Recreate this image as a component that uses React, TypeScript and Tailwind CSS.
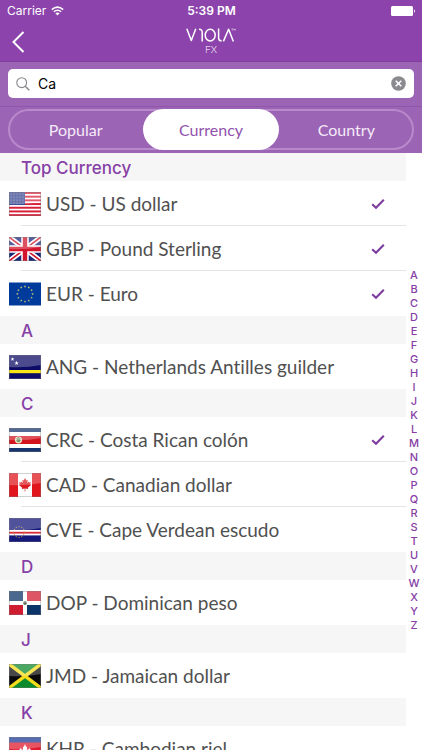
import { useState, type ReactNode } from "react";

type Currency = { code: string; name: string; flag: ReactNode; checked?: boolean };
type Section = { title: string; items: Currency[] };

const STAR_ANGLES = [0, 30, 60, 90, 120, 150, 180, 210, 240, 270, 300, 330];

function Flag({ children, gloss = true }: { children: ReactNode; gloss?: boolean }) {
  return (
    <svg viewBox="0 0 32 24" className="h-6 w-8 shrink-0" aria-hidden="true">
      {children}
      {gloss && (
        <>
          <path d="M0 0H32V10Q16 13 0 12Z" fill="#fff" opacity="0.26" />
          <rect x="0.5" y="0.5" width="31" height="23" fill="none" stroke="#777" strokeOpacity="0.35" />
        </>
      )}
    </svg>
  );
}

const flags = {
  us: (
    <Flag>
      <rect width="32" height="24" fill="#fff" />
      {[0, 1, 2, 3, 4, 5, 6].map((i) => (
        <rect key={i} y={i * 3.69} width="32" height="1.95" fill="#d8203a" />
      ))}
      <rect width="16" height="13" fill="#38478f" />
      {[2, 5, 8, 11].map((y) =>
        [2, 5, 8, 11, 14].map((x) => <circle key={`${x}-${y}`} cx={x} cy={y} r="0.5" fill="#a9b1da" />),
      )}
    </Flag>
  ),
  gb: (
    <Flag>
      <rect width="32" height="24" fill="#1b2878" />
      <path d="M0 0L32 24M32 0L0 24" stroke="#fff" strokeWidth="5" />
      <path d="M0 0L32 24M32 0L0 24" stroke="#cf142b" strokeWidth="1.6" />
      <path d="M16 0V24M0 12H32" stroke="#fff" strokeWidth="7.5" />
      <path d="M16 0V24M0 12H32" stroke="#d2142c" strokeWidth="4.4" />
    </Flag>
  ),
  eu: (
    <Flag gloss={false}>
      <rect width="32" height="23" y="0.5" fill="#003b9c" />
      {STAR_ANGLES.map((a) => (
        <path
          key={a}
          transform={`rotate(${a} 16 12) translate(16 4.4) rotate(${-a})`}
          d="M0-1.3L.35-.4H1.25L.5.15.8 1.05 0 .5-.8 1.05-.5.15-1.25-.4H-.35Z"
          fill="#d8cf70"
        />
      ))}
    </Flag>
  ),
  cw: (
    <Flag>
      <rect width="32" height="24" fill="#0c0c66" />
      <rect y="15" width="32" height="3.2" fill="#f6e416" />
      <path
        d="M3.5 2.2L4 3.6H5.3L4.3 4.4 4.6 5.7 3.5 4.9 2.4 5.7 2.7 4.4 1.7 3.6H3ZM7.6 5.8L8.2 7.4H9.8L8.5 8.4 9 10 7.6 9 6.2 10 6.7 8.4 5.4 7.4H7Z"
        fill="#fff"
      />
    </Flag>
  ),
  cr: (
    <Flag>
      <rect width="32" height="24" fill="#17356f" />
      <rect y="4" width="32" height="16" fill="#fff" />
      <rect y="8" width="32" height="8" fill="#d4141f" />
      <ellipse cx="9.5" cy="12" rx="3.6" ry="3.4" fill="#e9dfc8" />
      <circle cx="9.5" cy="12.2" r="2" fill="#6f9a63" />
      <path d="M7.5 10.5Q9.5 8.6 11.5 10.5" stroke="#7a5a3a" strokeWidth="0.8" fill="none" />
    </Flag>
  ),
  ca: (
    <Flag>
      <rect width="32" height="24" fill="#fff" />
      <path d="M0 0H9V24H0ZM23 0H32V24H23Z" fill="#e0161c" />
      <path
        d="M16 5L17.3 7.5 18.7 6.8 18.1 10 19.7 8.6 20.1 9.6 21.9 9.3 21.2 11.3 22.1 12 18.8 14.7 19.2 16 16.3 15.5V18.4H15.7V15.5L12.8 16 13.2 14.7 9.9 12 10.8 11.3 10.1 9.3 11.9 9.6 12.3 8.6 13.9 10 13.3 6.8 14.7 7.5Z"
        fill="#dc1a20"
      />
    </Flag>
  ),
  cv: (
    <Flag>
      <rect width="32" height="24" fill="#14187a" />
      <rect y="12" width="32" height="5.4" fill="#fff" />
      <rect y="13.8" width="32" height="1.8" fill="#d92936" />
      {STAR_ANGLES.map((a) => (
        <circle key={a} cx="10" cy="8.6" r="0.6" fill="#b5a04a" transform={`rotate(${a} 10 14)`} />
      ))}
    </Flag>
  ),
  do: (
    <Flag>
      <rect width="32" height="24" fill="#fff" />
      <path d="M0 0H14V10H0ZM18 14H32V24H18Z" fill="#0d3468" />
      <path d="M18 0H32V10H18ZM0 14H14V24H0Z" fill="#d01c30" />
      <circle cx="16" cy="12" r="1.9" fill="#5e7a62" />
      <circle cx="16" cy="12" r="0.8" fill="#9a4040" />
    </Flag>
  ),
  jm: (
    <Flag>
      <rect width="32" height="24" fill="#0c8a2c" />
      <path d="M0 0L16 12L0 24ZM32 0L16 12L32 24Z" fill="#0a0a0a" />
      <path d="M0 0L32 24M32 0L0 24" stroke="#f5dc1c" strokeWidth="3.4" />
    </Flag>
  ),
  kh: (
    <Flag>
      <rect width="32" height="24" fill="#1c3a96" />
      <rect y="5.5" width="32" height="13" fill="#e01a2c" />
      <path
        d="M9 17V15H10V12.5H11L11.8 10.5 12.6 12.5H14V10L15 9.5 16 7 17 9.5 18 10V12.5H19.4L20.2 10.5 21 12.5H22V15H23V17Z"
        fill="#fff"
      />
    </Flag>
  ),
};

const sections: Section[] = [
  {
    title: "Top Currency",
    items: [
      { code: "USD", name: "US dollar", flag: flags.us, checked: true },
      { code: "GBP", name: "Pound Sterling", flag: flags.gb, checked: true },
      { code: "EUR", name: "Euro", flag: flags.eu, checked: true },
    ],
  },
  { title: "A", items: [{ code: "ANG", name: "Netherlands Antilles guilder", flag: flags.cw }] },
  {
    title: "C",
    items: [
      { code: "CRC", name: "Costa Rican colón", flag: flags.cr, checked: true },
      { code: "CAD", name: "Canadian dollar", flag: flags.ca },
      { code: "CVE", name: "Cape Verdean escudo", flag: flags.cv },
    ],
  },
  { title: "D", items: [{ code: "DOP", name: "Dominican peso", flag: flags.do }] },
  { title: "J", items: [{ code: "JMD", name: "Jamaican dollar", flag: flags.jm }] },
  { title: "K", items: [{ code: "KHR", name: "Cambodian riel", flag: flags.kh }] },
];

const tabs = ["Popular", "Currency", "Country"];
const letters = "ABCDEFGHIJKLMNOPQRSTUVWXYZ".split("");

function StatusBar() {
  return (
    <div className="grid h-[22px] grid-cols-3 items-center pr-[6px] pl-[7px] text-[12px] leading-[22px] text-white">
      <div className="flex items-center gap-[5px]">
        <span>Carrier</span>
        <svg viewBox="0 0 13 10" className="h-[10px] w-[13px]" aria-hidden="true">
          <path d="M0.8 3.6Q6.5-1.4 12.2 3.6M2.8 5.8Q6.5 2.6 10.2 5.8" fill="none" stroke="#fff" strokeWidth="1.5" />
          <path d="M4.4 7.3Q6.5 5.6 8.6 7.3L6.5 9.6Z" fill="#fff" />
        </svg>
      </div>
      <div className="text-center font-semibold">5:39 PM</div>
      <svg viewBox="0 0 25 10" className="h-[10px] w-[25px] justify-self-end" aria-hidden="true">
        <rect width="22" height="10" rx="1.5" fill="#fff" />
        <path d="M23 3.2Q25 5 23 6.8Z" fill="#fff" />
      </svg>
    </div>
  );
}

function Logo() {
  return (
    <svg viewBox="0 0 50 14" className="h-[14px] w-[50px]" role="img" aria-label="Viola">
      <g fill="none" stroke="#fff" strokeWidth="1.5" strokeLinejoin="round">
        <path d="M0.8 0.8L5.3 12.6L9.8 0.8" />
        <path d="M13 1.3Q16.2 1.2 16.2 4.4V13.4" />
        <ellipse cx="24.2" cy="7.1" rx="5" ry="5.9" />
        <path d="M32.6 0.6V9.8Q32.6 12.9 35.6 12.8" />
        <path d="M37.4 13.4L42.6 1.2L47.4 13.4" />
      </g>
      <path d="M45.4 0.8H47.2M46.3 0.8V2.6M47.8 2.6V0.8L48.6 1.9L49.4 0.8V2.6" fill="none" stroke="#fff" strokeWidth="0.4" />
    </svg>
  );
}

function NavBar() {
  return (
    <div className="grid h-10 grid-cols-3 items-center border-b border-[#7f3c9c] px-3">
      <button aria-label="Back" className="justify-self-start">
        <svg viewBox="0 0 13 22" className="h-[22px] w-[13px]" aria-hidden="true">
          <path d="M11.5 1L1.5 11L11.5 21" fill="none" stroke="#fff" strokeWidth="2" />
        </svg>
      </button>
      <div className="flex flex-col items-center gap-px font-['Lato',sans-serif] text-white">
        <Logo />
        <div className="text-[10px] leading-[12px] font-light">FX</div>
      </div>
    </div>
  );
}

function Check() {
  return (
    <svg viewBox="0 0 14 12" className="h-3 w-[14px] shrink-0" role="img" aria-label="Selected">
      <path d="M1.2 6.2L5 9.8L12.8 1.8" fill="none" stroke="#7d3c9e" strokeWidth="2.1" />
    </svg>
  );
}

export default function App() {
  const [query, setQuery] = useState("Ca");
  const [tab, setTab] = useState("Currency");

  return (
    <div className="flex h-screen flex-col overflow-hidden bg-white font-['Inter',sans-serif]">
      <header className="shrink-0 bg-[#8c43ab]">
        <StatusBar />
        <NavBar />
      </header>

      <div className="shrink-0 border-b border-[#8f56aa] bg-[#9c64b5] px-2 pt-[7px] pb-2">
        <div className="flex h-[29px] items-center rounded-[5px] bg-white px-2">
          <svg viewBox="0 0 14 14" className="h-[14px] w-[14px] shrink-0" aria-hidden="true">
            <circle cx="5.7" cy="5.7" r="4.9" fill="none" stroke="#85858a" strokeWidth="1.1" />
            <path d="M9.2 9.2L13.3 13.3" stroke="#85858a" strokeWidth="1.4" />
          </svg>
          <input
            type="text"
            aria-label="Search currency"
            value={query}
            onChange={(e) => setQuery(e.target.value)}
            className="ml-2 min-w-0 flex-1 bg-transparent text-[14px] leading-5 text-black outline-none"
          />
          <button aria-label="Clear search" onClick={() => setQuery("")}>
            <svg viewBox="0 0 15 15" className="h-[15px] w-[15px]" aria-hidden="true">
              <circle cx="7.5" cy="7.5" r="7.3" fill="#8a8a8f" />
              <path d="M4.7 4.7L10.3 10.3M10.3 4.7L4.7 10.3" stroke="#fff" strokeWidth="1.6" />
            </svg>
          </button>
        </div>
      </div>

      <div className="shrink-0 bg-[#9c64b5] px-2 pt-[2px] pb-[3px] font-['Lato',sans-serif]">
        <div className="relative grid h-[41px] grid-cols-3 rounded-full">
          <div className="pointer-events-none absolute inset-0 rounded-full border-2 border-[#b98acb]" />
          {tabs.map((t) => (
            <button
              key={t}
              onClick={() => setTab(t)}
              className={
                t === tab
                  ? "relative rounded-full bg-white text-[16px] text-[#9152ad]"
                  : "relative rounded-full text-[16px] text-[#f5eaf9]"
              }
            >
              {t}
            </button>
          ))}
        </div>
      </div>

      <div className="flex min-h-0 flex-1">
        <main className="min-w-0 flex-1 overflow-y-auto [scrollbar-width:none]">
          {sections.map((s) => (
            <section key={s.title}>
              <h2 className="h-7 bg-[#f6f6f6] pl-[21px] text-[17px] leading-[30px] font-medium text-[#8640a6]">
                {s.title}
              </h2>
              <ul>
                {s.items.map((c) => (
                  <li key={c.code} className="group/row pl-[9px]">
                    <div className="flex h-[45px] items-center">
                      {c.flag}
                      <div className="ml-[5px] min-w-0 flex-1 truncate font-['Lato',sans-serif] text-[19px] leading-6 text-[#505050] [font-variant-ligatures:none]">
                        {c.code} - {c.name}
                      </div>
                      {c.checked && (
                        <div className="pr-[21px]">
                          <Check />
                        </div>
                      )}
                    </div>
                    <div className="-mt-px ml-3 h-px bg-[#e4e4e6] group-last/row:bg-transparent" />
                  </li>
                ))}
              </ul>
            </section>
          ))}
        </main>
        <nav aria-label="Index" className="flex w-4 shrink-0 flex-col items-center justify-center pb-1">
          {letters.map((l) => (
            <a key={l} href={`#${l}`} className="text-[11px] leading-[14px] font-medium text-[#8640a6]">
              {l}
            </a>
          ))}
        </nav>
      </div>
    </div>
  );
}
